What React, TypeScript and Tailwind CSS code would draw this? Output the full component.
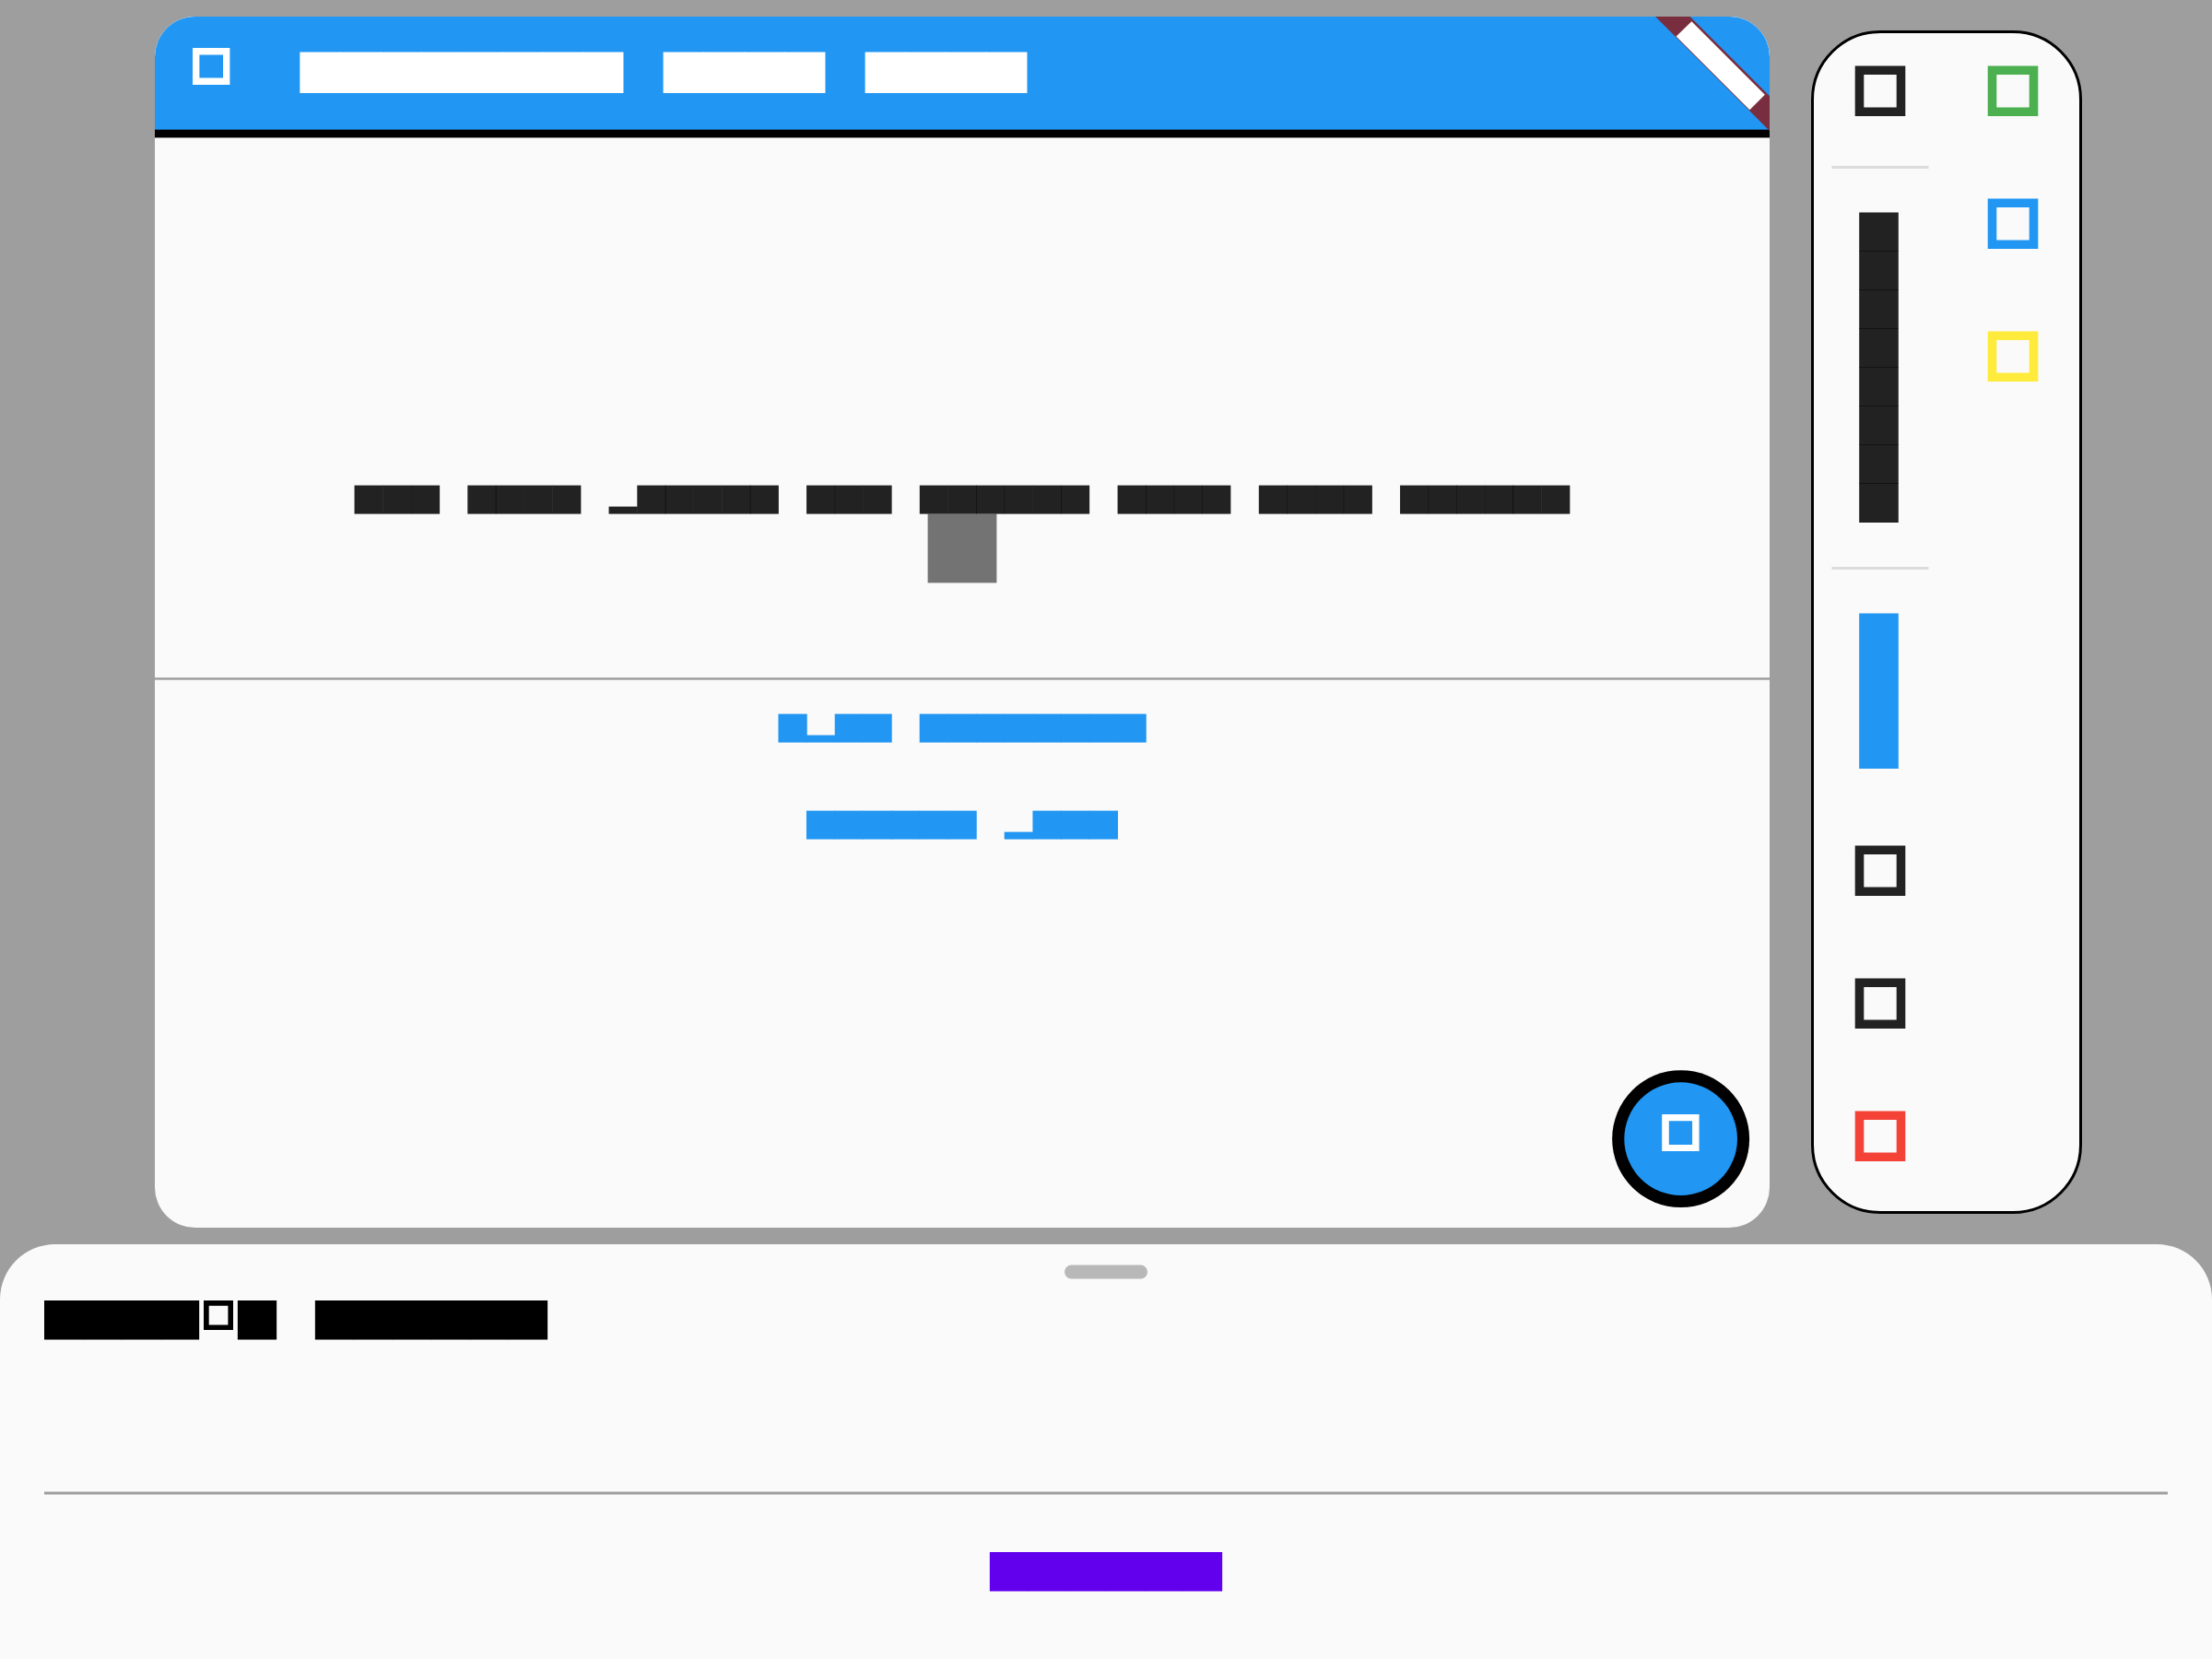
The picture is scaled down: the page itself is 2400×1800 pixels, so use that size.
import React from "react";

type BlockLineProps = {
  /* "x" is a full block, "p" a block below the baseline, " " a gap */
  pattern: string;
  em: number;
  width: number;
  height: number;
  top: number;
  blockHeight: number;
  start?: number;
  opacity?: number;
  bleed?: number;
  className: string;
};

const quarter = (n: number) => Math.round(n * 4) / 4;

function BlockLine({
  pattern,
  em,
  width,
  height,
  top,
  blockHeight,
  start,
  opacity = 1,
  bleed = 0.3,
  className,
}: BlockLineProps) {
  const origin = start ?? (width - pattern.length * em) / 2;
  return (
    <svg width={width} height={height} className={`block shrink-0 ${className}`} fill="currentColor">
      {pattern.split("").map((c, i) => {
        if (c === " ") return null;
        const low = c === "p";
        const h = low ? em * 0.25 + 0.3 : blockHeight;
        return (
          <rect
            key={i}
            x={quarter(origin + i * em) - bleed / 2}
            y={low ? top + blockHeight - h : top}
            width={em + bleed}
            height={h}
            fillOpacity={opacity}
          />
        );
      })}
    </svg>
  );
}

function BlockColumn({ count, opacity = 1, className }: { count: number; opacity?: number; className: string }) {
  return (
    <svg width={44} height={count * 42 + 1} className={`block shrink-0 ${className}`} fill="currentColor">
      {Array.from({ length: count }, (_, i) => (
        <rect key={i} x={0.2} y={0.5 + i * 42} width={42.6} height={42.5} fillOpacity={opacity} />
      ))}
    </svg>
  );
}

function ToolIcon({ className, opacity = 1 }: { className: string; opacity?: number }) {
  return (
    <svg width={56} height={55} className={`block shrink-0 ${className}`} fill="currentColor">
      <path
        fillRule="evenodd"
        fillOpacity={opacity}
        d="M0.7 0.5H55.3V55H0.7Z M10.3 10V45.5H45.7V10Z"
      />
    </svg>
  );
}

function AppBar() {
  return (
    <header className="flex h-[132px] flex-col bg-[#fafafa]">
      <div className="flex h-[122px] shrink-0 items-start bg-[#2196f3]">
        <svg width={41} height={40} className="mt-[34px] ml-[41px] block shrink-0 text-white" fill="currentColor">
          <path fillRule="evenodd" d="M0 0H40.4V40H0Z M7.4 7.4V32.6H33V7.4Z" />
        </svg>
        <BlockLine
          pattern="xxxxxxxx xxxx xxxx"
          em={43.8}
          width={800}
          height={46}
          top={0.5}
          blockHeight={44.5}
          start={7.68}
          bleed={0.8}
          className="mt-[38px] ml-[68px] text-white"
        />
      </div>
      <svg width={1752} height={10} className="block shrink-0">
        <rect width={1752} height={1} fill="#2196f3" />
        <rect y={0.64} width={1752} height={8.76} fill="#000" />
      </svg>
    </header>
  );
}

function DebugRibbon() {
  return (
    <svg width={126} height={126} className="absolute top-0 right-0 block">
      <path d="M2.1 0H39.7L126 86.3V123.9Z" fill="#792e3f" />
      <path d="M41.4 5.2L120.9 84.8L104.4 101.3L24.6 21.6Z" fill="#fff" />
    </svg>
  );
}

function AddButton() {
  return (
    <svg width={150} height={150} className="absolute top-[1143px] left-[1581px] block">
      <circle cx={74.64} cy={74.64} r={74.46} fill="#000" />
      <circle cx={74.64} cy={74.64} r={61.32} fill="#2196f3" />
      <path fillRule="evenodd" fill="#fff" d="M54.2 48H94.6V88H54.2Z M61.8 55.3V81H87.1V55.3Z" />
    </svg>
  );
}

function AppWindow() {
  return (
    <section className="relative mt-[18px] ml-[168px] flex h-[1314px] w-[1752px] shrink-0 flex-col overflow-hidden rounded-[43.8px] bg-[#fafafa]">
      <AppBar />
      <main className="flex flex-col pt-[376px]">
        <BlockLine
          pattern="xxx xxxx pxxxxx xxx xxxxxx xxxx xxxx xxxxxx"
          em={30.66}
          width={1752}
          height={32}
          top={0.6}
          blockHeight={31}
          opacity={0.867}
          bleed={0.4}
          className="text-black"
        />
        <svg width={76} height={76} className="-mt-px ml-[838px] block shrink-0">
          <rect x={0.6} y={0.6} width={74.8} height={74.8} fill="#000" fillOpacity={0.54} />
        </svg>
        <svg width={1752} height={3} className="mt-[102px] block shrink-0">
          <rect y={0.2} width={1752} height={2.5} fill="#9e9e9e" />
        </svg>
        <BlockLine
          pattern="xpxx xxxxxxxx"
          em={30.66}
          width={1752}
          height={32}
          top={0.6}
          blockHeight={31}
          bleed={0.6}
          className="mt-9 text-[#2196f3]"
        />
        <BlockLine
          pattern="xxxxxx pxxx"
          em={30.66}
          width={1752}
          height={32}
          top={0.6}
          blockHeight={31}
          bleed={0.6}
          className="mt-[73px] text-[#2196f3]"
        />
      </main>
      <DebugRibbon />
      <AddButton />
    </section>
  );
}

function ToolDivider() {
  return (
    <svg width={106} height={3} className="-ml-[25px] block shrink-0">
      <rect x={0.5} width={105} height={3} fill="#dcdcdc" />
    </svg>
  );
}

function Toolbar() {
  return (
    <aside className="mt-[33px] ml-[45px] flex h-[1284px] w-[294px] shrink-0 rounded-[75px] border-[3px] border-black bg-[#fafafa] pt-[35px] pl-11">
      <div className="flex w-36 flex-col">
        <ToolIcon className="text-black" opacity={0.867} />
        <div className="mt-[54px]">
          <ToolDivider />
        </div>
        <BlockColumn count={8} opacity={0.867} className="mt-[47px] ml-[5px] text-black" />
        <div className="mt-12">
          <ToolDivider />
        </div>
        <BlockColumn count={4} className="mt-[47px] ml-[5px] text-[#2196f3]" />
        <div className="mt-[83px] flex flex-col gap-[89px]">
          <ToolIcon className="text-black" opacity={0.867} />
          <ToolIcon className="text-black" opacity={0.867} />
          <ToolIcon className="text-[#f44336]" />
        </div>
      </div>
      <div className="flex flex-col gap-[89px]">
        <ToolIcon className="text-[#4caf50]" />
        <ToolIcon className="text-[#2196f3]" />
        <ToolIcon className="text-[#ffeb3b]" />
      </div>
    </aside>
  );
}

function BottomSheet() {
  return (
    <section className="flex h-[450px] w-full flex-col rounded-t-[60px] bg-[#fafafa] px-12 pt-[22px]">
      <svg width={90} height={16} className="block shrink-0 self-center">
        <rect y={0.5} width={90} height={15} rx={7.5} fill="#b8b8b8" />
      </svg>
      <div className="mt-[23px] flex h-[43px] items-start">
        <BlockLine pattern="xxxx" em={42} width={173} height={43} top={0} blockHeight={42.5} start={0} className="text-black" />
        <svg width={32} height={32} className="block shrink-0">
          <path fillRule="evenodd" d="M0 0H32V32H0Z M5.7 5.7V26.6H26.4V5.7Z" />
        </svg>
        <BlockLine
          pattern="x xxxxxx"
          em={42}
          width={350}
          height={43}
          top={0}
          blockHeight={42.5}
          start={5}
          className="text-black"
        />
      </div>
      <svg width={2304} height={4} className="mt-[164px] block shrink-0">
        <rect y={0.5} width={2304} height={3} fill="#9e9e9e" />
      </svg>
      <BlockLine
        pattern="xxxxxx"
        em={42}
        width={256}
        height={43}
        top={0}
        blockHeight={42.5}
        className="mt-[62px] self-center text-[#6200ee]"
      />
    </section>
  );
}

export default function App() {
  return (
    <div className="h-[1800px] w-[2400px] overflow-hidden bg-[#9e9e9e]">
      <div className="flex h-[1350px] items-start">
        <AppWindow />
        <Toolbar />
      </div>
      <BottomSheet />
    </div>
  );
}
